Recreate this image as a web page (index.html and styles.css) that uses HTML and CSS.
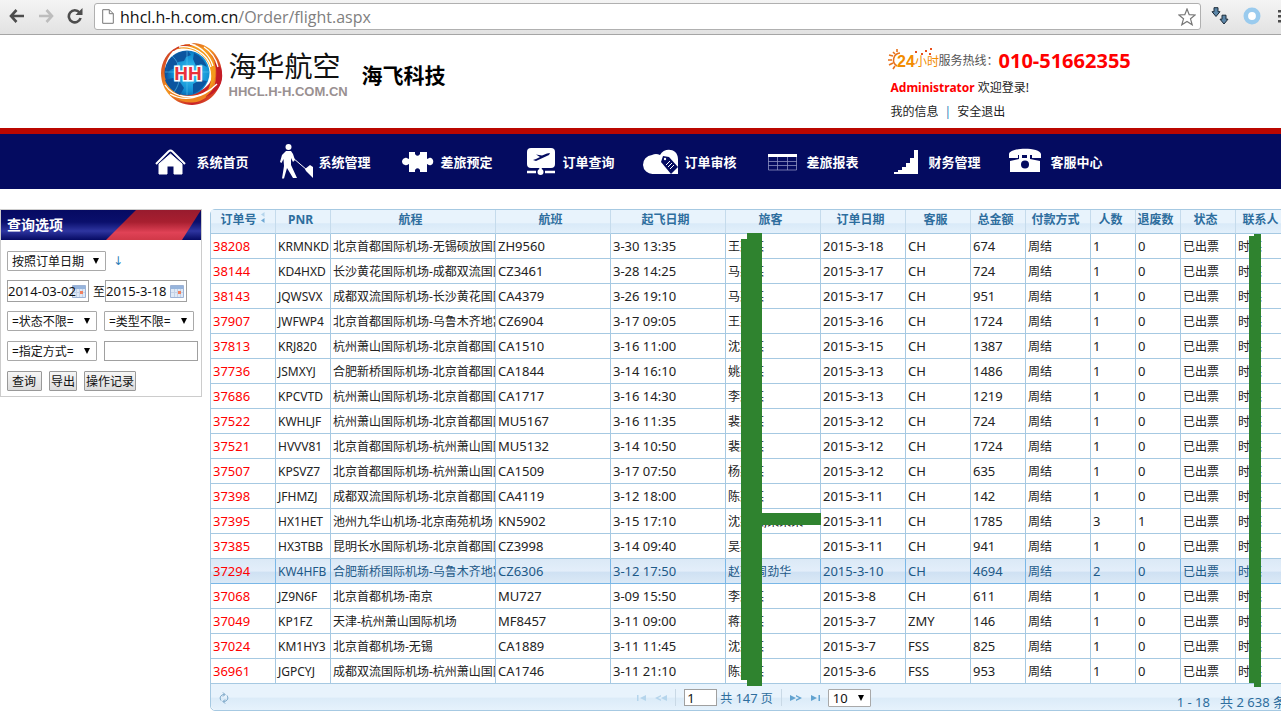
FILE: index.html
```html
<!DOCTYPE html>
<html lang="zh-CN">
<head>
    <meta charset="UTF-8">
    <meta name="viewport" content="width=device-width, initial-scale=1.0">
    <title>海华航空</title>
    <link rel="stylesheet" href="styles.css">
</head>
<body>
    <div class="browser-bar">
        <button class="tool" aria-label="后退">
            <svg width="16" height="14" viewBox="0 0 16 14" fill="none" stroke="#4d4d4d" stroke-width="2.6"><path d="M15 7H2M7.500 1L2 7l5.500 6"/></svg>
        </button>
        <button class="tool" aria-label="前进">
            <svg width="16" height="14" viewBox="0 0 16 14" fill="none" stroke="#bdbdbd" stroke-width="2.600"><path d="M1 7h13M8.500 1L14 7l-5.500 6"/></svg>
        </button>
        <button class="tool reload" aria-label="刷新">
            <svg width="16" height="16" viewBox="0 0 16 16"><path d="M12.500 4.500A6 6 0 1 0 13.600 10" fill="none" stroke="#4d4d4d" stroke-width="2.600"/><path d="M15.500 0v7h-7z" fill="#4d4d4d"/></svg>
        </button>
        <div class="address" role="textbox" aria-label="地址">
            <svg width="12" height="15" viewBox="0 0 12 15"><path d="M.7.7h6.600l4 4v9.600H.7z" fill="#fff" stroke="#777"/><path d="M7.300.7v4h4" fill="none" stroke="#777"/></svg>
            <span class="url">hhcl.h-h.com.cn<span class="path">/Order/flight.aspx</span></span>
            <svg width="18" height="18" viewBox="0 0 18 18"><path d="M9 1l2.200 5.700 6 .3-4.700 3.800 1.700 6L9 13.500l-5.200 3.300 1.700-6L.8 7l6-.3z" fill="#fff" stroke="#777" stroke-width="1.200"/></svg>
        </div>
        <button class="tool ext" aria-label="下载">
            <svg width="18" height="18" viewBox="0 0 18 18" fill="#5b86a8" stroke="#1c2a38"><path d="M3 .7h4v4h2L5 9.500 1 4.700h2zM11 8.200h4v4h2L13 17l-4-4.800h2z"/></svg>
        </button>
        <button class="tool ext" aria-label="扩展">
            <svg width="18" height="18" viewBox="0 0 18 18"><circle cx="9" cy="9" r="6.200" fill="#fff" stroke="#9acbee" stroke-width="4.600"/></svg>
        </button>
        <button class="tool more" aria-label="菜单">
            <svg width="16" height="14" viewBox="0 0 16 14" fill="#4d4d4d"><path d="M0 1h16v2.500H0zM0 6h16v2.500H0zM0 11h16v2.500H0z"/></svg>
        </button>
    </div>

    <div class="header">
        <div class="header-inner">
            <svg class="logo" width="64" height="64" viewBox="0 0 64 64">
                <defs>
                    <radialGradient id="sea" cx=".6" cy=".5" r=".6"><stop offset="0" stop-color="#3ed0f8"/><stop offset=".7" stop-color="#0f8ad0"/><stop offset="1" stop-color="#0b4d9a"/></radialGradient>
                    <linearGradient id="flame" x1="0" y1="0" x2="1" y2="1"><stop offset="0" stop-color="#c0202a"/><stop offset=".45" stop-color="#f59a1f"/><stop offset=".75" stop-color="#c81e28"/><stop offset="1" stop-color="#f08a20"/></linearGradient>
                </defs>
                <path d="M31 1c18-1 31 14 31 31S48 63 32 63C15 63 1 49 1 31 1 20 8 9 16 6c-9 8-14 20-9 32 5 11 18 15 30 12 10-3 17-12 16-22C51 15 43 4 31 1z" fill="url(#flame)"/>
                <path d="M5 43c7 10 22 14 36 9 9-4 14-12 14-22 3 12-3 24-15 29C25 64 10 56 5 43z" fill="#ee8420"/>
                <path d="M54 20c6 14 2 28-9 35 14-4 20-16 16-29z" fill="#c41c26"/>
                <path d="M14 8C24-1 42-1 53 17c5 10 3 24-5 31 5-11 4-22-2-30C39 8 27 4 14 8z" fill="#f39a1d"/>
                <path d="M12 9C18 3 28 1 34 4c-8-1-15 1-20 5z" fill="#cf3a24"/>
                <path d="M19 5c14-2 28 7 32 20M30 2c12 3 20 12 23 22M5 43c8 12 26 16 43 6M10 52c14 8 32 5 47-10M44 5c8 5 12 12 14 20" fill="none" stroke="#fff" stroke-width="1.300"/>
                <circle cx="27" cy="31" r="22.500" fill="url(#sea)"/>
                <path d="M9 18c5-6 13-9 19-9l3 4-5 2-2 4-6 1-3 6-5 2-4 6zM34 11c7 3 11 8 13 14l-6-3-5 2-3-7zM13 36l7 4 4 6-4 7C12 49 7 44 5 38zM33 42l7-4 7 1c-3 6-8 11-14 13z" fill="#0c559f"/>
                <path d="M5 30h45M27 9v44M12 14c10 8 10 26 2 36" stroke="#58c3ef" stroke-width=".6" fill="none"/>
                <text x="28" y="38" class="logo-hh">HH</text>
            </svg>
            <div class="brand">
                <div class="brand-name">海华航空</div>
                <div class="brand-url">HHCL.H-H.COM.CN</div>
            </div>
            <h1>海飞科技</h1>
            <div class="account">
                <div class="hotline">
                    <svg width="51" height="24" viewBox="0 0 51 24">
                        <path d="M12 5a7 7 0 0 0-3 13M5 4l2 2M1 7l4 1M0 12h4M1 17l4-2M5 21l2-3M9 1v3" fill="none" stroke="#e8731c" stroke-width="1.600"/>
                        <path d="M27 3h2v2h-2zM33 5h2v2h-2zM37 2h2v2h-2zM41 5h2v2h-2zM42 0h2v2h-2z" fill="#e8501c"/>
                        <text x="9" y="19" class="h24">24</text>
                        <text x="27" y="18" class="hour">小时</text>
                    </svg>
                    <span>服务热线：</span>
                    <strong>010-51662355</strong>
                </div>
                <div class="welcome"><b>Administrator</b> 欢迎登录!</div>
                <div class="links"><a href="#">我的信息</a><i>|</i><a href="#">安全退出</a></div>
            </div>
        </div>
    </div>

    <nav class="menu">
        <ul>
            <li><a href="#">
                <svg viewBox="0 0 40 40"><path d="M17.500 12L29 22v10h-8v-8h-7v8H6V22z" fill="#fff" stroke="#fff" stroke-linejoin="round"/><path d="M3 22L15.500 9.500q2-2 4 0L32 22" fill="none" stroke="#fff" stroke-width="2"/></svg>
                系统首页</a></li>
            <li><a href="#">
                <svg viewBox="0 0 40 40" fill="#fff"><circle cx="13.500" cy="5" r="3"/><path d="M11 9h5l2 3 2 6-2 2-2-4v7l6 13h-4l-6-10-3 10.500H7L9 24l-.5-7-2 4-1.500-1 2-7z"/><path d="M18 16l14 12" stroke="#fff"/><path d="M30 27l5-4 3 2v11l-7-7z"/></svg>
                系统管理</a></li>
            <li><a href="#">
                <svg viewBox="0 0 40 40"><path d="M12 10h6c-1 5 6 5 5 0h7v7c1 0 2-2 4-1 3 1 3 6 0 7-2 1-3-1-4-1v8h-7c1-5-6-5-5 0h-6v-8c-1 0-2 2-4 1-4-1-4-6 0-7 2-1 3 1 4 1z" fill="#fff"/></svg>
                差旅预定</a></li>
            <li><a href="#">
                <svg viewBox="0 0 40 40"><rect x="8" y="6" width="28" height="20" rx="4" fill="#fff"/><path d="M8 30h9M26 30h10M21.500 26v5" stroke="#fff" stroke-width="2.500"/><circle cx="21.500" cy="30" r="3" fill="#fff"/><path d="M14 18l3 1L30 13l1-2-3 .5-5 2-6-1 4 2.500-4 2z" fill="#040b60"/></svg>
                订单查询</a></li>
            <li><a href="#">
                <svg viewBox="0 0 40 40"><path d="M12 32a8 8 0 0 1-1-19 9 9 0 0 1 8 0c4-8 18-7 18 4v15z" fill="#fff"/><path d="M22 14l6 1 9 10-7 7-10-12z" fill="#040b60"/><circle cx="24" cy="17" r="1.200" fill="#fff"/><path d="M25 23l4-4M27 25l4-4M29 27l4-4" stroke="#fff"/></svg>
                订单审核</a></li>
            <li><a href="#">
                <svg viewBox="0 0 40 40"><path d="M5 12h29v3H5z" fill="#fff"/><path d="M5.500 15v13h28V15M5 19.500h29M5 23.500h29M14.500 15v13M24.500 15v13" fill="none" stroke="#8d91c0" stroke-width=".8"/></svg>
                差旅报表</a></li>
            <li><a href="#">
                <svg viewBox="0 0 40 40"><path d="M9 32v-2h4v-2h4v-3h4v-4h4v-5h4V8h4v24z" fill="#fff"/></svg>
                财务管理</a></li>
            <li><a href="#">
                <svg viewBox="0 0 40 40"><path d="M2 16V12C3 5 33 5 34 12v4h-9v-3H11v3zM12 13h3v3h5v-3h3v4l10 2v11H3V19l9-2z" fill="#fff"/><circle cx="18" cy="22.500" r="4" fill="#040b60"/></svg>
                客服中心</a></li>
        </ul>
    </nav>

    <div class="main">
        <form class="search">
            <h2>查询选项</h2>
            <div class="fields">
                <div class="field">
                    <select class="wide" aria-label="日期类型"><option>按照订单日期</option></select>
                    <span class="arrow">↓</span>
                </div>
                <div class="field dates">
                    <input type="text" id="from" value="2014-03-02" aria-label="开始日期">
                    <label for="to">至</label>
                    <input type="text" id="to" value="2015-3-18">
                </div>
                <div class="field">
                    <select aria-label="状态"><option>=状态不限=</option></select>
                    <select aria-label="类型"><option>=类型不限=</option></select>
                </div>
                <div class="field">
                    <select aria-label="方式"><option>=指定方式=</option></select>
                    <input type="text" class="keyword" aria-label="关键字">
                </div>
                <div class="field">
                    <button type="button" class="query">查询</button>
                    <button type="button">导出</button>
                    <button type="button">操作记录</button>
                </div>
            </div>
        </form>

        <div class="grid">
            <table>
                <colgroup>
                    <col class="w65"><col class="w55"><col class="w165"><col class="w115"><col class="w115"><col class="w95"><col class="w85"><col class="w65"><col class="w55"><col class="w65"><col class="w45"><col class="w45"><col class="w55"><col class="w50">
                </colgroup>
                <thead>
                    <tr>
                        <th>订单号 <svg width="6" height="12" viewBox="0 0 6 12"><path d="M4.500 0v5L1 2.500z" fill="#b5d5ec"/><path d="M4.500 6v5L1 8.500z" fill="#6fa8d4"/></svg></th>
                        <th>PNR</th><th>航程</th><th>航班</th><th>起飞日期</th><th>旅客</th><th>订单日期</th><th>客服</th><th>总金额</th><th>付款方式</th><th>人数</th><th>退废数</th><th>状态</th><th>联系人</th>
                    </tr>
                </thead>
                <tbody id="orders"></tbody>
            </table>
            <div class="pager">
                <button class="refresh" aria-label="刷新列表">
                    <svg width="12" height="12" viewBox="0 0 12 12" fill="none" stroke="#6c9cc0"><path d="M3 8.500C1 5.500 3 2.500 6.500 2.500M5 .5l2 2-2 2M9 3.500c2 3 0 6-3.500 6M7 11.500l-2-2 2-2"/></svg>
                </button>
                <div class="pages">
                    <button class="off" aria-label="首页"><svg width="10" height="6" viewBox="0 0 10 6"><path d="M0 0h1.500v6H0zM9 0v6L3 3z"/></svg></button>
                    <button class="off" aria-label="上一页"><svg width="12" height="6" viewBox="0 0 12 6"><path d="M6 0v1.500L3 3l3 1.500V6L0 3zM12 0v6L6 3z"/></svg></button>
                    <span class="sep"></span>
                    <label>
                        <input type="text" value="1"> 共 <span>147</span> 页
                    </label>
                    <span class="sep"></span>
                    <button aria-label="下一页"><svg width="12" height="6" viewBox="0 0 12 6"><path d="M0 0l6 3-6 3zM6 0l6 3-6 3V4.500L9 3 6 1.500z"/></svg></button>
                    <button aria-label="末页"><svg width="10" height="6" viewBox="0 0 10 6"><path d="M8.500 0H10v6H8.500zM1 0l6 3-6 3z"/></svg></button>
                    <select aria-label="每页条数"><option>10</option></select>
                </div>
                <div class="total">1 - 18&nbsp;&nbsp; 共 2 638 条</div>
            </div>
            <div class="mask passenger"></div>
            <div class="mask passenger-edge"></div>
            <div class="mask passenger-row"></div>
            <div class="mask contact"></div>
            <div class="mask contact-edge"></div>
        </div>
    </div>

    <script>
        const orders = [
            ['38208', 'KRMNKD', '北京首都国际机场-无锡硕放国际', 'ZH9560', '3-30 13:35', '王某某', '2015-3-18', 'CH', '674', '1', '0'],
            ['38144', 'KD4HXD', '长沙黄花国际机场-成都双流国际', 'CZ3461', '3-28 14:25', '马某某', '2015-3-17', 'CH', '724', '1', '0'],
            ['38143', 'JQWSVX', '成都双流国际机场-长沙黄花国际', 'CA4379', '3-26 19:10', '马某某', '2015-3-17', 'CH', '951', '1', '0'],
            ['37907', 'JWFWP4', '北京首都国际机场-乌鲁木齐地窝', 'CZ6904', '3-17 09:05', '王某', '2015-3-16', 'CH', '1724', '1', '0'],
            ['37813', 'KRJ820', '杭州萧山国际机场-北京首都国际', 'CA1510', '3-16 11:00', '沈某某', '2015-3-15', 'CH', '1387', '1', '0'],
            ['37736', 'JSMXYJ', '合肥新桥国际机场-北京首都国际', 'CA1844', '3-14 16:10', '姚某某', '2015-3-13', 'CH', '1486', '1', '0'],
            ['37686', 'KPCVTD', '杭州萧山国际机场-北京首都国际', 'CA1717', '3-16 14:30', '李某某', '2015-3-13', 'CH', '1219', '1', '0'],
            ['37522', 'KWHLJF', '杭州萧山国际机场-北京首都国际', 'MU5167', '3-16 11:35', '裴某某', '2015-3-12', 'CH', '724', '1', '0'],
            ['37521', 'HVVV81', '北京首都国际机场-杭州萧山国际', 'MU5132', '3-14 10:50', '裴某某', '2015-3-12', 'CH', '1724', '1', '0'],
            ['37507', 'KPSVZ7', '北京首都国际机场-杭州萧山国际', 'CA1509', '3-17 07:50', '杨某某', '2015-3-12', 'CH', '635', '1', '0'],
            ['37398', 'JFHMZJ', '成都双流国际机场-北京首都国际', 'CA4119', '3-12 18:00', '陈某某', '2015-3-11', 'CH', '142', '1', '0'],
            ['37395', 'HX1HET', '池州九华山机场-北京南苑机场', 'KN5902', '3-15 17:10', '沈某某,某某某', '2015-3-11', 'CH', '1785', '3', '1'],
            ['37385', 'HX3TBB', '昆明长水国际机场-北京首都国际', 'CZ3998', '3-14 09:40', '吴某', '2015-3-11', 'CH', '941', '1', '0'],
            ['37294', 'KW4HFB', '合肥新桥国际机场-乌鲁木齐地窝', 'CZ6306', '3-12 17:50', '赵某,周劲华', '2015-3-10', 'CH', '4694', '2', '0'],
            ['37068', 'JZ9N6F', '北京首都机场-南京', 'MU727', '3-09 15:50', '李某某', '2015-3-8', 'CH', '611', '1', '0'],
            ['37049', 'KP1FZ', '天津-杭州萧山国际机场', 'MF8457', '3-11 09:00', '蒋某某', '2015-3-7', 'ZMY', '146', '1', '0'],
            ['37024', 'KM1HY3', '北京首都机场-无锡', 'CA1889', '3-11 11:45', '沈某某', '2015-3-7', 'FSS', '825', '1', '0'],
            ['36961', 'JGPCYJ', '成都双流国际机场-杭州萧山国际', 'CA1746', '3-11 21:10', '陈某某', '2015-3-6', 'FSS', '953', '1', '0']
        ];
        const tbody = document.getElementById('orders');

        orders.forEach(order => {
            const [id, pnr, route, flight, depart, passenger, date, staff, amount, people, refunds] = order;
            const row = tbody.insertRow();
            if (id === '37294') row.className = 'hover';
            row.innerHTML = `<td class="id">${id}</td><td class="cn">${pnr}</td><td class="cn">${route}</td>
                <td>${flight}</td><td>${depart}</td><td class="cn">${passenger}</td><td>${date}</td>
                <td>${staff}</td><td>${amount}</td><td class="cn">周结</td><td>${people}</td><td>${refunds}</td>
                <td class="cn">已出票</td><td class="cn">时某</td>`;
        });
    </script>
</body>
</html>
```
FILE: styles.css
```css
* {
    box-sizing: border-box;
}

body {
    margin: 0;
    background: #fff;
    color: #222;
    font-family: "Noto Sans", "Noto Sans CJK SC", sans-serif;
    font-size: 12px;
    overflow-x: hidden;
}

button, input, select {
    font: inherit;
    color: inherit;
    margin: 0;
    padding: 0;
}

svg {
    flex: none;
}

/* browser toolbar */
.browser-bar {
    display: flex;
    align-items: center;
    height: 35px;
    padding: 0 0 3px 9px;
    background: linear-gradient(#f4f4f4, #e2e2e2);
    border-bottom: 1px solid #a5a5a5;
    overflow: hidden;
}

.tool {
    display: flex;
    flex: none;
    margin-right: 13px;
    border: 0;
    background: none;
}

.tool.reload {
    margin-right: 11px;
}

.tool.ext {
    margin: 0 4px 0 10px;
}

.tool.more {
    width: 3px;
    margin: 0 0 0 13px;
    overflow: hidden;
}

.address {
    display: flex;
    flex: 1;
    align-items: center;
    gap: 6px;
    height: 27px;
    margin-top: 2px;
    padding: 0 4px 0 7px;
    background: #fff;
    border: 1px solid #b0b0b0;
    border-radius: 3px;
}

.url {
    flex: 1;
    color: #111;
    font-family: "Open Sans", sans-serif;
    font-size: 16px;
}

.path {
    color: #808080;
}

/* header */
.header-inner {
    display: flex;
    align-items: flex-start;
    max-width: 976px;
    height: 93px;
    margin: 0 auto;
    padding: 7px 0 0 7px;
}

.logo-hh {
    font: bold 19px "Liberation Sans", sans-serif;
    fill: #e8323c;
    stroke: #fff;
    stroke-width: 3px;
    paint-order: stroke;
    text-anchor: middle;
}

.brand {
    padding: 8px 0 0 5px;
    width: 138px;
}

.brand-name {
    color: #111;
    font-size: 28px;
    line-height: 32px;
}

.brand-url {
    color: #9a9192;
    font-family: "Liberation Sans", sans-serif;
    font-size: 13px;
    font-weight: bold;
    line-height: 20px;
}

h1 {
    margin: 17px 0 0;
    color: #000;
    font-size: 21px;
    line-height: 32px;
}

.account {
    width: 241px;
    margin: 4px 0 0 auto;
}

.hotline {
    display: flex;
    align-items: center;
    height: 28px;
    margin-bottom: 2px;
    color: #555;
    white-space: nowrap;
}

.hotline strong {
    color: #f00;
    font-size: 20px;
}

.h24 {
    font: bold 16px "Liberation Sans", sans-serif;
    fill: #f28c00;
}

.hour {
    font-size: 12px;
    fill: #f28c00;
}

.welcome, .links {
    padding-left: 3px;
    line-height: 24px;
}

.welcome b {
    color: #f00;
}

.links a {
    color: #222;
    text-decoration: none;
}

.links i {
    margin: 0 6px;
    color: #2e7fb8;
    font-style: normal;
}

/* main menu */
.menu {
    height: 61px;
    background: #040b60;
    border-top: 6px solid #ba0700;
}

.menu ul {
    display: flex;
    max-width: 976px;
    margin: 0 auto;
    padding: 0;
    list-style: none;
}

.menu li {
    flex: 1;
}

.menu a {
    display: flex;
    align-items: center;
    gap: 4px;
    height: 55px;
    color: #fff;
    font-size: 13px;
    font-weight: bold;
    text-decoration: none;
    white-space: nowrap;
}

.menu svg {
    width: 40px;
    height: 40px;
}

.main {
    display: flex;
    align-items: flex-start;
    gap: 8px;
    padding-top: 20px;
}

/* search panel */
.search {
    flex: none;
    width: 202px;
    border: 1px solid #ccc;
}

.search h2 {
    position: relative;
    z-index: 0;
    margin: 0;
    padding-left: 6px;
    background: linear-gradient(#060a62, #0a0f6c 40%, #2e35a0 70%, #060a62);
    color: #fff;
    font-size: 14px;
    line-height: 30px;
}

/* red stripe behind the title */
.search h2::after {
    content: "";
    position: absolute;
    z-index: -1;
    top: 0;
    right: 0;
    width: 95px;
    height: 30px;
    background: linear-gradient(#981b2e, #a81f30 40%, #e04256 75%, #d03848);
    clip-path: polygon(30px 0, 95px 0, 76px 100%, 0 100%);
}

.fields {
    display: flex;
    flex-direction: column;
    gap: 10px;
    padding: 11px 0 5px 6px;
}

.field {
    display: flex;
    align-items: center;
    gap: 7px;
    height: 20px;
    color: #111;
}

select {
    appearance: none;
    width: 90px;
    height: 20px;
    padding-left: 4px;
    border: 1px solid #a9a9a9;
    border-radius: 1px;
    background: #fff url("data:image/svg+xml,%3Csvg xmlns='http://www.w3.org/2000/svg' width='6' height='6'%3E%3Cpath d='M0 0h6L3 6z'/%3E%3C/svg%3E") right 6px center no-repeat;
}

select.wide {
    width: 99px;
}

.arrow {
    color: #2e7fb8;
    font-family: "DejaVu Sans", sans-serif;
    font-size: 12px;
}

input[type="text"] {
    border: 1px solid #a0a0a0;
    background: #fff;
}

.dates {
    gap: 0;
}

.dates input {
    width: 82px;
    height: 22px;
    font-size: 13px;
    background: #fff url("data:image/svg+xml,%3Csvg xmlns='http://www.w3.org/2000/svg' width='14' height='13'%3E%3Cpath fill='%23dfe9f6' stroke='%239db3d6' d='M.5.5h13v12H.5z'/%3E%3Cpath fill='%2396b4dc' d='M1 1h12v3H1z'/%3E%3Cpath stroke='%23c5d2e6' d='M4.500 4v8M7.500 4v8M10.500 4v8M1 7.500h12'/%3E%3Cpath fill='%23f08060' d='M8 6h3v3H8z'/%3E%3C/svg%3E") right 2px center no-repeat;
}

.dates label {
    padding-left: 4px;
}

.keyword {
    width: 94px;
    height: 20px;
}

.field button {
    height: 20px;
    padding: 0 1px;
    border: 1px solid #999;
    border-radius: 1px;
    background: linear-gradient(#f6f6f6, #dcdcdc);
}

.field .query {
    padding: 0 5px 0 4px;
}

/* order list */
.grid {
    position: relative;
    flex: 1 0 1077px;
    border: 1px solid #a6c9e2;
    border-radius: 5px;
}

table {
    width: 1075px;
    table-layout: fixed;
    border-collapse: separate;
    border-spacing: 0;
}

.w45 { width: 45px; }
.w50 { width: 50px; }
.w55 { width: 55px; }
.w65 { width: 65px; }
.w85 { width: 85px; }
.w95 { width: 95px; }
.w115 { width: 115px; }
.w165 { width: 165px; }

th, td {
    height: 25px;
    padding: 0 0 0 2px;
    border-right: 1px solid #a6c9e2;
    border-bottom: 1px solid #a6c9e2;
    line-height: 20px;
    overflow: hidden;
    white-space: nowrap;
}

th {
    height: 24px;
    padding: 0 5px 4px 0;
    border-right-color: #c5dbec;
    background: linear-gradient(#e8f3fc 55%, #d9eaf8 60%, #e3f0fb);
    color: #2e6e9e;
    font-size: 12px;
    line-height: 19px;
}

th:first-child, th:last-child {
    padding-right: 0;
}

td {
    font-size: 13px;
}

td.cn {
    padding-top: 1px;
    font-size: 12px;
}

td.id {
    color: #f00;
}

.hover td {
    background: linear-gradient(#dbe9f6, #e3eefa 50%, #cfe1f3 55%, #dbe9f6);
    border-color: #79b7e7;
    color: #1d5987;
}

.hover td.id {
    color: #f00;
}

.pager {
    display: grid;
    grid-template-columns: 1fr auto 1fr;
    align-items: center;
    height: 26px;
    padding: 0 0 0 7px;
    background: linear-gradient(#e8f3fc 50%, #dbebf8 55%, #e6f2fc);
    border-radius: 0 0 5px 5px;
    color: #2e6e9e;
}

.pager button {
    display: flex;
    border: 0;
    background: none;
    fill: #62a3d0;
}

.pager .off {
    fill: #b5d5ec;
}

.pages {
    display: flex;
    align-items: center;
    gap: 8px;
    padding-left: 4px;
}

.sep {
    width: 1px;
    height: 17px;
    background: #c9d9e6;
}

.pages label {
    font-size: 12px;
}

.pages label span {
    font-size: 13px;
}

.pages input[type="text"] {
    width: 33px;
    height: 17px;
    padding-left: 2px;
    color: #111;
    font-size: 13px;
}

.pages select {
    width: 43px;
    height: 18px;
    color: #111;
    font-size: 13px;
    line-height: 16px;
}

.total {
    padding-top: 8px;
    font-size: 13px;
    text-align: right;
    white-space: nowrap;
}

/* strips that hide personal names */
.mask {
    position: absolute;
    background: #2f832f;
}

.passenger {
    top: 23px;
    left: 536px;
    width: 15px;
    height: 453px;
}

.passenger-edge {
    top: 29px;
    left: 530px;
    width: 6px;
    height: 441px;
}

.passenger-row {
    top: 303px;
    left: 551px;
    width: 59px;
    height: 12px;
}

.contact {
    top: 24px;
    left: 1043px;
    width: 7px;
    height: 453px;
}

.contact-edge {
    top: 26px;
    left: 1038px;
    width: 5px;
    height: 447px;
}
```
